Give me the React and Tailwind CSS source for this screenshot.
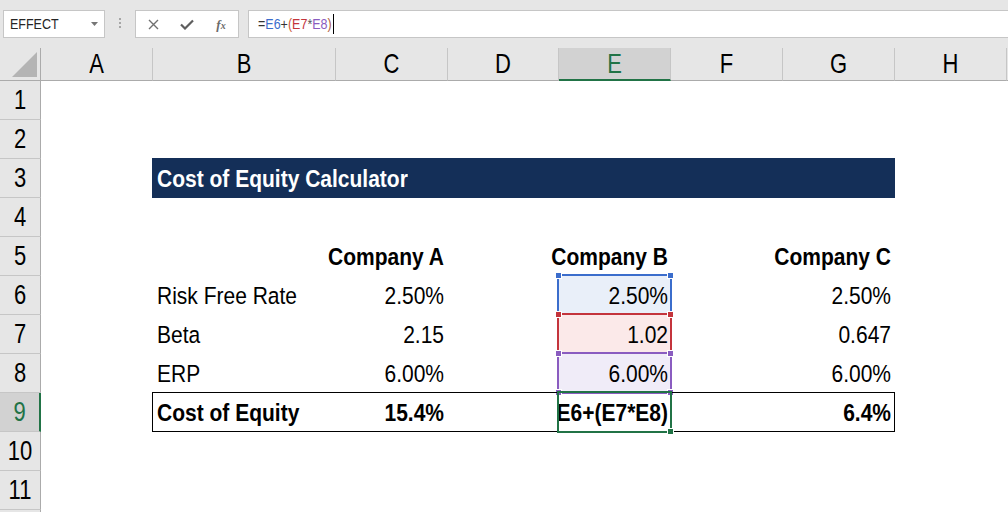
import React from "react";

function T({ children, bold }) {
  return (
    <span
      className={
        bold
          ? "inline-block shrink-0 whitespace-nowrap leading-none scale-y-[1.17] font-bold text-[21px]"
          : "inline-block shrink-0 whitespace-nowrap leading-none scale-y-[1.17] text-[21px]"
      }
    >
      {children}
    </span>
  );
}

function H({ children }) {
  return <span className="inline-block leading-none scale-y-[1.25] text-[22px]">{children}</span>;
}

function ColHead({ label, w, active }) {
  if (active) {
    return (
      <div className={`${w} h-[33px] shrink-0 flex items-center justify-center bg-[#d2d2d2] text-[#217346] border-r border-r-[#c6c6c6] border-b-2 border-b-[#217346]`}>
        <H>{label}</H>
      </div>
    );
  }
  return (
    <div className={`${w} h-[33px] shrink-0 flex items-center justify-center bg-[#e6e6e6] text-black border-r border-r-[#c6c6c6] border-b border-b-[#ababab]`}>
      <H>{label}</H>
    </div>
  );
}

function RowHead({ n, active }) {
  if (active) {
    return (
      <div className="w-[41px] h-[39px] shrink-0 flex items-center justify-center bg-[#d2d2d2] text-[#217346] border-r-2 border-r-[#217346] border-b border-b-[#c6c6c6]">
        <H>{n}</H>
      </div>
    );
  }
  return (
    <div className="w-[41px] h-[39px] shrink-0 flex items-center justify-center bg-[#e6e6e6] text-black border-r border-r-[#ababab] border-b border-b-[#c6c6c6]">
      {n ? <H>{n}</H> : null}
    </div>
  );
}

function Sq({ pos, color }) {
  return <div className={`absolute w-[7px] h-[7px] border border-white ${pos} ${color}`} />;
}

function RangeBox({ border, sq }) {
  return (
    <div className={`absolute -top-[2px] -left-[2px] -right-[1px] -bottom-[1px] border-2 pointer-events-none ${border}`}>
      <Sq pos="-top-[4px] -left-[4px]" color={sq} />
      <Sq pos="-top-[4px] -right-[4px]" color={sq} />
      <Sq pos="-bottom-[4px] -left-[4px]" color={sq} />
      <Sq pos="-bottom-[4px] -right-[4px]" color={sq} />
    </div>
  );
}

function Row({ n, active, children }) {
  return (
    <div className="flex h-[39px]">
      <RowHead n={n} active={active} />
      <div className="relative flex h-[39px] flex-1">{children}</div>
    </div>
  );
}

function DataRow({ n, active, label, c, e, g, bold, eBg, eBox, boxed, clip }) {
  return (
    <Row n={n} active={active}>
      {boxed && <div className="absolute -top-[1px] left-[111px] w-[743px] h-[40px] border border-black pointer-events-none" />}
      <div className="w-[112px] shrink-0" />
      <div className="w-[183px] shrink-0 flex items-center pl-[4px]">{label && <T bold={bold}>{label}</T>}</div>
      <div className="w-[112px] shrink-0 flex items-center justify-end pr-[4px]">{c && <T bold={bold}>{c}</T>}</div>
      <div className="w-[111px] shrink-0" />
      <div className={`w-[112px] shrink-0 relative ${eBg || ""}`}>
        <div
          className={
            clip
              ? "w-full h-full flex items-center justify-end overflow-hidden pr-[3px]"
              : "w-full h-full flex items-center justify-end pr-[3px]"
          }
        >
          {e && <T bold={bold}>{e}</T>}
        </div>
        {eBox}
      </div>
      <div className="w-[112px] shrink-0" />
      <div className="w-[112px] shrink-0 flex items-center justify-end pr-[4px]">{g && <T bold={bold}>{g}</T>}</div>
    </Row>
  );
}

export default function App() {
  const cols = [
    ["A", "w-[112px]"],
    ["B", "w-[183px]"],
    ["C", "w-[112px]"],
    ["D", "w-[111px]"],
    ["E", "w-[112px]"],
    ["F", "w-[112px]"],
    ["G", "w-[112px]"],
    ["H", "w-[112px]"],
  ];
  return (
    <div className="w-[1008px] h-[512px] overflow-hidden bg-white text-black font-['Liberation_Sans',Arial,sans-serif]">
      {/* Formula bar */}
      <div className="h-[48px] bg-[#e6e6e6] flex items-start pt-[10px]">
        <div className="ml-[3px] w-[102px] h-[28px] bg-white border border-[#c6c6c6] flex items-center justify-between pl-[6px] pr-[6px] shrink-0">
          <span className="inline-block leading-none scale-y-[1.15] text-[12.5px] text-[#262626]">EFFECT</span>
          <svg width="7" height="4" viewBox="0 0 7 4">
            <path d="M0 0H7L3.5 4Z" fill="#767676" />
          </svg>
        </div>
        <div className="ml-[14px] mt-[8px] flex flex-col gap-[2px] shrink-0">
          <div className="w-[2px] h-[2px] bg-[#a6a6a6]" />
          <div className="w-[2px] h-[2px] bg-[#a6a6a6]" />
          <div className="w-[2px] h-[2px] bg-[#a6a6a6]" />
        </div>
        <div className="ml-[14px] w-[104px] h-[28px] bg-white border border-[#c6c6c6] flex items-center shrink-0">
          <div className="w-[36px] flex justify-center">
            <svg width="11" height="11" viewBox="0 0 11 11">
              <path d="M1 1L10 10M10 1L1 10" stroke="#707070" strokeWidth="1.4" />
            </svg>
          </div>
          <div className="w-[36px] flex justify-center">
            <svg width="14" height="11" viewBox="0 0 14 11">
              <path d="M1 5.5L5 9.5L13 1.5" stroke="#5e5e5e" strokeWidth="2.2" fill="none" />
            </svg>
          </div>
          <div className="w-[36px] flex justify-center">
            <span className="font-['Liberation_Serif',serif] italic font-bold text-[#6b6b6b] text-[13px] leading-none">
              f<span className="text-[10px]">x</span>
            </span>
          </div>
        </div>
        <div className="ml-[9px] flex-1 h-[28px] bg-white border border-r-0 border-[#c6c6c6] flex items-center pl-[9px]">
          <span className="inline-block leading-none scale-y-[1.15] text-[12.5px] text-[#333]">
            =<span className="text-[#3b6dcc]">E6</span>+<span className="text-[#cc5a3c]">(</span>
            <span className="text-[#c4343c]">E7</span>
            <span className="text-[#555]">*</span>
            <span className="text-[#8a5cc0]">E8</span>
            <span className="text-[#b06040]">)</span>
          </span>
          <div className="w-[1px] h-[20px] bg-black ml-[1px]" />
        </div>
      </div>

      {/* Column headers */}
      <div className="flex h-[33px]">
        <div className="w-[41px] h-[33px] shrink-0 bg-[#e6e6e6] border-r border-r-[#ababab] border-b border-b-[#ababab] flex items-end justify-end pr-[3px] pb-[3px]">
          <svg width="25" height="25" viewBox="0 0 25 25">
            <path d="M25 0V25H0Z" fill="#b4b4b4" />
          </svg>
        </div>
        {cols.map(([l, w]) => (
          <ColHead key={l} label={l} w={w} active={l === "E"} />
        ))}
        <div className="flex-1 h-[33px] bg-[#e6e6e6] border-b border-b-[#ababab]" />
      </div>

      {/* Rows */}
      <Row n={1} />
      <Row n={2} />
      <Row n={3}>
        <div className="w-[111px] shrink-0" />
        <div className="w-[743px] h-[40px] -mt-[1px] shrink-0 bg-[#142f58] text-white flex items-center pl-[5px]">
          <T bold>Cost of Equity Calculator</T>
        </div>
      </Row>
      <Row n={4} />
      <DataRow n={5} bold c="Company A" e="Company B" g="Company C" />
      <DataRow
        n={6}
        label="Risk Free Rate"
        c="2.50%"
        e="2.50%"
        g="2.50%"
        eBg="bg-[#e9eff9]"
        eBox={<RangeBox border="border-[#3b6dcc]" sq="bg-[#3b6dcc]" />}
      />
      <DataRow
        n={7}
        label="Beta"
        c="2.15"
        e="1.02"
        g="0.647"
        eBg="bg-[#fbe9e9]"
        eBox={<RangeBox border="border-[#c4343c]" sq="bg-[#c4343c]" />}
      />
      <DataRow
        n={8}
        label="ERP"
        c="6.00%"
        e="6.00%"
        g="6.00%"
        eBg="bg-[#f0ecf8]"
        eBox={<RangeBox border="border-[#8a5cc0]" sq="bg-[#8a5cc0]" />}
      />
      <DataRow
        n={9}
        active
        boxed
        bold
        clip
        label="Cost of Equity"
        c="15.4%"
        e="=E6+(E7*E8)"
        g="6.4%"
        eBox={
          <div className="absolute -top-[2px] -left-[2px] -right-[1px] -bottom-[1px] border-2 border-[#217346] pointer-events-none">
            <Sq pos="-bottom-[4px] -right-[4px]" color="bg-[#217346]" />
          </div>
        }
      />
      <Row n={10} />
      <Row n={11} />
      <Row />
    </div>
  );
}
